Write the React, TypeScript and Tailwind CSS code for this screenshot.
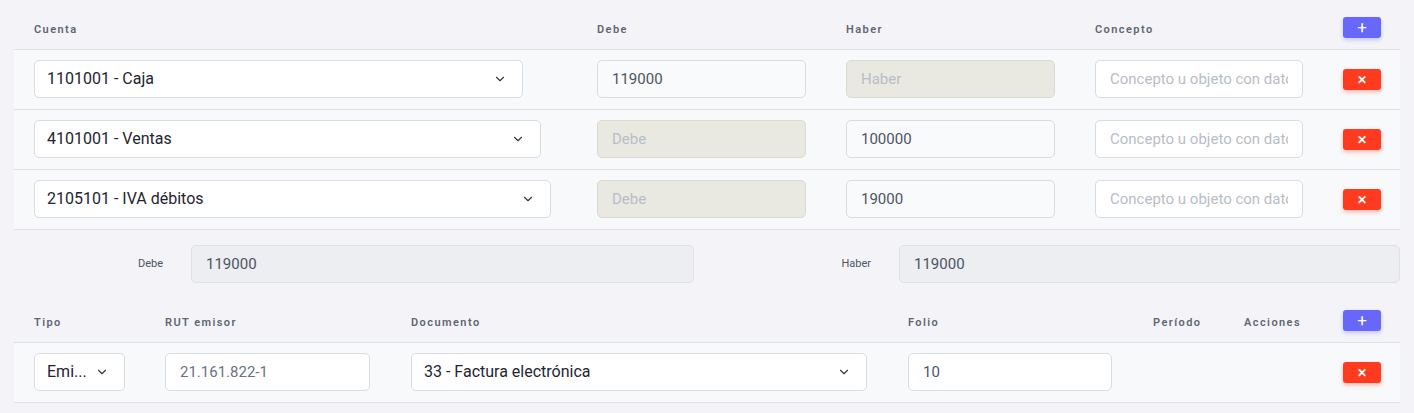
import { ChevronDown } from 'lucide-react';

const font = { fontFamily: 'Roboto, "Liberation Sans", sans-serif' };

const headCls = 'pt-[5px] text-[11px] font-semibold tracking-[0.13em] text-[#5f6673]';
const inputCls =
  'h-[38px] rounded-[5px] border border-[#d8dce3] px-[14px] text-[15px] text-[#4b5563] placeholder:text-[#b9bdc6] outline-none';

const PlusBtn = () => (
  <button className="flex h-[21px] w-[38px] items-center justify-center rounded-[3px] bg-[#6767fa] text-[17px] leading-none text-white shadow-[0_2px_4px_rgba(103,103,250,0.35)]">
    +
  </button>
);

const DelBtn = () => (
  <button className="flex h-[21px] w-[38px] items-center justify-center rounded-[3px] bg-[#ff3b1f] text-[12px] font-bold leading-none text-white shadow-[0_2px_4px_rgba(255,59,31,0.35)]">
    ✕
  </button>
);

const Select = ({ label, width }: { label: string; width: string }) => (
  <div
    className={`flex h-[38px] ${width} items-center justify-between rounded-[5px] border border-[#d8dce3] bg-white pl-[12px] pr-[15px]`}
  >
    <span className="truncate text-[16px] text-[#1f2530]">{label}</span>
    <ChevronDown className="h-[14px] w-[14px] flex-shrink-0 text-[#333a45]" strokeWidth={2} />
  </div>
);

type Line = { cuenta: string; width: string; debe: string; haber: string };

const lines: Line[] = [
  { cuenta: '1101001 - Caja', width: 'w-[489px]', debe: '119000', haber: '' },
  { cuenta: '4101001 - Ventas', width: 'w-[507px]', debe: '', haber: '100000' },
  { cuenta: '2105101 - IVA débitos', width: 'w-[517px]', debe: '', haber: '19000' },
];

const AmountInput = ({ value, placeholder }: { value: string; placeholder: string }) =>
  value ? (
    <input readOnly value={value} className={`${inputCls} w-full bg-[#f9fafb]`} />
  ) : (
    <input
      disabled
      placeholder={placeholder}
      className={`${inputCls} w-full border-[#d9dad2] bg-[#e9e9e2]`}
    />
  );

const cols1 = 'grid grid-cols-[563px_249px_249px_248px_79px]';
const cols2 = 'grid grid-cols-[131px_246px_497px_245px_91px_99px_79px]';

export default function App() {
  return (
    <div className="h-[413px] w-full bg-[#f4f4f8] px-[14px]" style={font}>
      {/* Asientos */}
      <div className={`${cols1} h-[50px] items-center border-b border-[#dfe1e6] pt-[6px]`}>
        <div className={`${headCls} pl-[20px]`}>Cuenta</div>
        <div className={`${headCls} pl-[20px]`}>Debe</div>
        <div className={`${headCls} pl-[20px]`}>Haber</div>
        <div className={`${headCls} pl-[20px]`}>Concepto</div>
        <div className="pl-[20px]">
          <PlusBtn />
        </div>
      </div>
      {lines.map((l) => (
        <div
          key={l.cuenta}
          className={`${cols1} h-[60px] items-start border-b border-[#dfe1e6] bg-[#f8f9fb] pt-[10px]`}
        >
          <div className="pl-[20px]">
            <Select label={l.cuenta} width={l.width} />
          </div>
          <div className="px-[20px]">
            <AmountInput value={l.debe} placeholder="Debe" />
          </div>
          <div className="px-[20px]">
            <AmountInput value={l.haber} placeholder="Haber" />
          </div>
          <div className="px-[20px]">
            <input placeholder="Concepto u objeto con datos" className={`${inputCls} w-full bg-white`} />
          </div>
          <div className="pl-[20px] pt-[9px]">
            <DelBtn />
          </div>
        </div>
      ))}

      {/* Totales */}
      <div className="flex h-[63px] items-start pt-[15px]">
        <div className="flex h-[38px] w-[177px] shrink-0 items-center justify-end pr-[28px] text-[11px] text-[#4b5563]">
          Debe
        </div>
        <input
          readOnly
          value="119000"
          className={`${inputCls} w-[503px] shrink-0 border-[#dfe1e6] bg-[#eceef2]`}
        />
        <div className="flex h-[38px] w-[205px] shrink-0 items-center justify-end pr-[28px] text-[11px] text-[#4b5563]">
          Haber
        </div>
        <input
          readOnly
          value="119000"
          className={`${inputCls} min-w-0 flex-1 border-[#dfe1e6] bg-[#eceef2]`}
        />
      </div>

      {/* Documentos */}
      <div className={`${cols2} h-[50px] items-center border-b border-[#dfe1e6] pt-[6px]`}>
        <div className={`${headCls} pl-[20px]`}>Tipo</div>
        <div className={`${headCls} pl-[20px]`}>RUT emisor</div>
        <div className={`${headCls} pl-[20px]`}>Documento</div>
        <div className={`${headCls} pl-[20px]`}>Folio</div>
        <div className={`${headCls} pl-[20px]`}>Período</div>
        <div className={`${headCls} pl-[20px]`}>Acciones</div>
        <div className="pl-[20px]">
          <PlusBtn />
        </div>
      </div>
      <div className={`${cols2} h-[60px] items-start border-b border-[#dfe1e6] bg-[#f8f9fb] pt-[10px]`}>
        <div className="pl-[20px]">
          <Select label="Emi..." width="w-[91px]" />
        </div>
        <div className="pl-[20px] pr-[21px]">
          <input readOnly value="21.161.822-1" className={`${inputCls} w-full bg-white text-[#6b7280]`} />
        </div>
        <div className="pl-[20px] pr-[21px]">
          <Select label="33 - Factura electrónica" width="w-full" />
        </div>
        <div className="pl-[20px] pr-[21px]">
          <input readOnly value="10" className={`${inputCls} w-full bg-white`} />
        </div>
        <div />
        <div />
        <div className="pl-[20px] pt-[9px]">
          <DelBtn />
        </div>
      </div>
    </div>
  );
}
